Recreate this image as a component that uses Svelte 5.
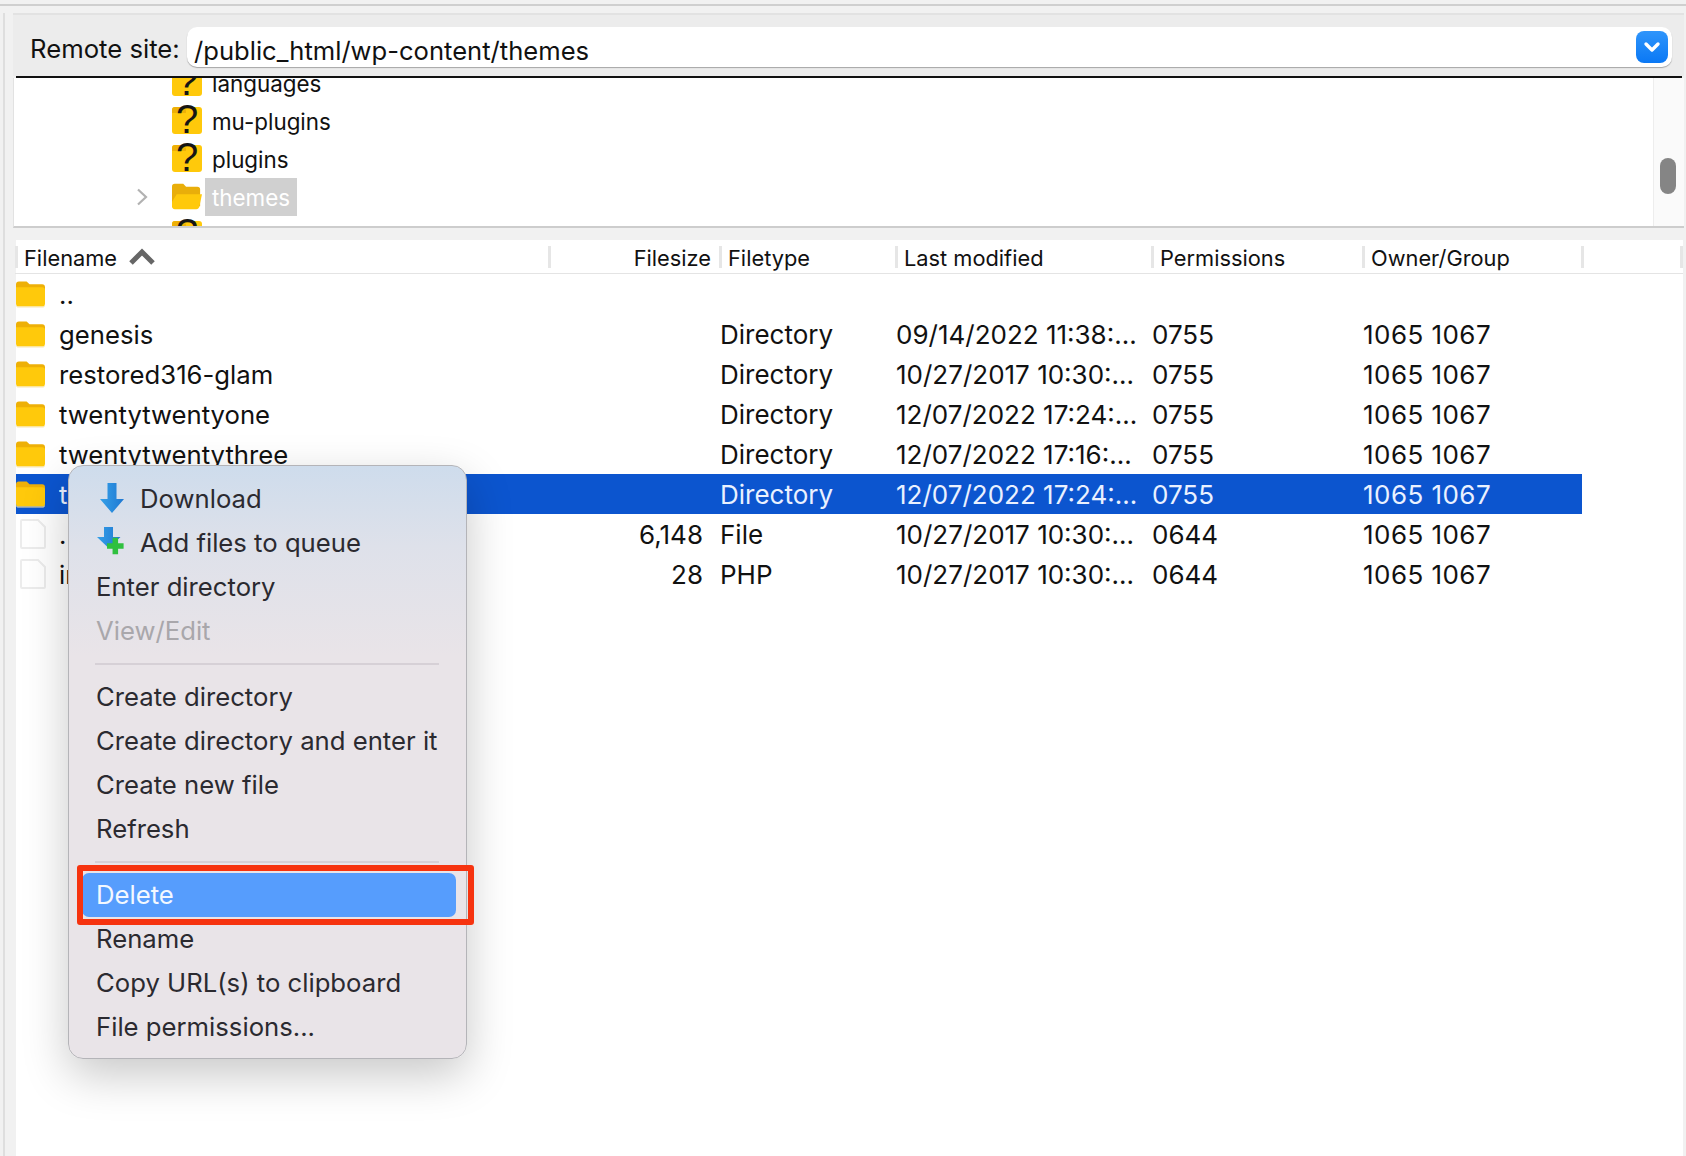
<script>
  const files = [
    { name: '..', size: '', type: '', date: '', perm: '', owner: '', icon: 'folder' },
    { name: 'genesis', size: '', type: 'Directory', date: '09/14/2022 11:38:...', perm: '0755', owner: '1065 1067', icon: 'folder' },
    { name: 'restored316-glam', size: '', type: 'Directory', date: '10/27/2017 10:30:...', perm: '0755', owner: '1065 1067', icon: 'folder' },
    { name: 'twentytwentyone', size: '', type: 'Directory', date: '12/07/2022 17:24:...', perm: '0755', owner: '1065 1067', icon: 'folder' },
    { name: 'twentytwentythree', size: '', type: 'Directory', date: '12/07/2022 17:16:...', perm: '0755', owner: '1065 1067', icon: 'folder' },
    { name: 'twentytwentytwo', size: '', type: 'Directory', date: '12/07/2022 17:24:...', perm: '0755', owner: '1065 1067', icon: 'folder', selected: true },
    { name: '.DS_Store', size: '6,148', type: 'File', date: '10/27/2017 10:30:...', perm: '0644', owner: '1065 1067', icon: 'file' },
    { name: 'index.php', size: '28', type: 'PHP', date: '10/27/2017 10:30:...', perm: '0644', owner: '1065 1067', icon: 'file' }
  ];

  const tree = [
    { name: 'languages', icon: 'unknown' },
    { name: 'mu-plugins', icon: 'unknown' },
    { name: 'plugins', icon: 'unknown' },
    { name: 'themes', icon: 'open', selected: true },
    { name: 'uploads', icon: 'unknown' }
  ];

  const columns = ['Filesize', 'Filetype', 'Last modified', 'Permissions', 'Owner/Group'];

  const topMenu = ['Enter directory'];
  const createMenu = ['Create directory', 'Create directory and enter it', 'Create new file', 'Refresh'];
  const bottomMenu = ['Rename', 'Copy URL(s) to clipboard', 'File permissions...'];
</script>

{#snippet folder()}
  <svg class="folder" viewBox="0 0 30 28">
    <path d="M0 4q0-3 3-3h8l3 3h13q3 0 3 3v5H0z" fill="#eeb007" />
    <path d="M0 7h27q3 0 3 3v14q0 3-3 3H3q-3 0-3-3z" fill="#ffc90b" />
    <path d="M3 27h24q3 0 3-3v1q0 3-3 3H3q-3 0-3-3v-1q0 3 3 3z" fill="#f7e6b0" />
  </svg>
{/snippet}

{#snippet unknown()}
  <svg class="tree-icon" viewBox="0 0 30 32">
    <path d="M0 6q0-3 3-3h24q3 0 3 3v21q0 3-3 3H3q-3 0-3-3z" fill="#ffc90b" />
    <path d="M0 6q0-3 3-3h8l3 3v3H0z" fill="#eeb007" />
    <text x="15" y="29" text-anchor="middle" class="qmark">?</text>
  </svg>
{/snippet}

{#snippet open()}
  <svg class="tree-icon" viewBox="0 0 32 32">
    <path d="M0 6q0-3 3-3h9l3 3h12q3 0 3 3v18H0z" fill="#e9ae0a" />
    <path d="M5 14h27l-3 14q-1 2-3 2H3q-3 0-3-3v-5z" fill="#ffc90b" />
  </svg>
{/snippet}

<div class="app">
  <div class="topline"></div>
  <div class="body">
    <div class="rail"></div>
    <div class="main">
      <div class="site">
        <span class="site-label">Remote site:</span>
        <div class="site-input">
          <span class="site-path">/public_html/wp-content/themes</span>
          <span class="site-btn">
            <svg viewBox="0 0 32 32" width="32" height="32">
              <path d="M10 13l6 6 6-6" fill="none" stroke="#fff" stroke-width="3.4" stroke-linecap="round" stroke-linejoin="round" />
            </svg>
          </span>
        </div>
      </div>
      <div class="rule"></div>

      <div class="tree">
        <div class="tree-rows">
          {#each tree as node}
            <div class="tree-row">
              <span class="twisty">
                {#if node.selected}
                  <svg viewBox="0 0 12 18" width="12" height="18">
                    <path d="M2 1.500l8 7.500-8 7.500" fill="none" stroke="#b2b2b2" stroke-width="2.2" />
                  </svg>
                {/if}
              </span>
              {#if node.icon === 'open'}
                {@render open()}
              {:else}
                {@render unknown()}
              {/if}
              <span class="tree-name" class:selected={node.selected}>{node.name}</span>
            </div>
          {/each}
        </div>
        <div class="scrollbar"><div class="thumb"></div></div>
      </div>

      <div class="list">
        <div class="grid head">
          <div class="th name">
            Filename
            <svg viewBox="0 0 28 18" width="28" height="18">
              <path d="M3 15L14 4l11 11" fill="none" stroke="#666" stroke-width="5" />
            </svg>
          </div>
          {#each columns as col, i}
            <div class="th" class:right={i === 0}>{col}</div>
          {/each}
          <div class="th"></div>
        </div>
        {#each files as file}
          <div class="grid row" class:selected={file.selected}>
            <div class="td name">
              {#if file.icon === 'folder'}
                {@render folder()}
              {:else}
                <svg class="file" viewBox="0 0 26 30">
                  <path d="M2 1h16l7 7v20q0 1-1 1H2q-1 0-1-1V2q0-1 1-1z" fill="#fff" stroke="#ececec" stroke-width="2" />
                </svg>
              {/if}
              <span class="filename">{file.name}</span>
            </div>
            <div class="td size">{file.size}</div>
            <div class="td">{file.type}</div>
            <div class="td">{file.date}</div>
            <div class="td">{file.perm}</div>
            <div class="td owner">{file.owner}</div>
          </div>
        {/each}
      </div>
    </div>
  </div>

  <div class="menu">
    <div class="item has-icon">
      <svg class="menu-icon" viewBox="0 0 26 32">
        <defs>
          <linearGradient id="arrow" x1="0" y1="0" x2="1" y2="0">
            <stop offset="0" stop-color="#35a0e8" />
            <stop offset="1" stop-color="#1f78d2" />
          </linearGradient>
        </defs>
        <path d="M8.500 1h9v16H25L13 31 1 17h7.500z" fill="url(#arrow)" />
      </svg>
      Download
    </div>
    <div class="item has-icon">
      <svg class="menu-icon queue" viewBox="0 0 30 32">
        <path d="M8 1h9v10h7.500L12.500 22 1 11h7z" fill="url(#arrow)" />
        <path d="M18 16h6v6h6v6h-6v6h-6v-6h-6v-6h6z" fill="#2fc03f" transform="translate(0 -3) scale(.92)" />
      </svg>
      Add files to queue
    </div>
    {#each topMenu as label}
      <div class="item">{label}</div>
    {/each}
    <div class="item disabled">View/Edit</div>
    <div class="sep"></div>
    {#each createMenu as label}
      <div class="item">{label}</div>
    {/each}
    <div class="sep"></div>
    <div class="item active">Delete</div>
    {#each bottomMenu as label}
      <div class="item">{label}</div>
    {/each}
  </div>
  <div class="callout"></div>
</div>

<style>
  :global(body) {
    margin: 0;
  }

  .app {
    position: relative;
    display: flex;
    flex-direction: column;
    height: 1156px;
    overflow: hidden;
    background: #f1f1f1;
    font-family: Inter, 'Noto Sans', sans-serif;
    color: #111;
  }

  .topline {
    box-sizing: border-box;
    height: 6px;
    border-bottom: 2px solid #cfcfcf;
  }

  .body {
    flex: 1;
    display: flex;
    min-height: 0;
    padding-top: 7px;
  }

  .rail {
    width: 3px;
    border-right: 2px solid #dedede;
  }

  .main {
    display: flex;
    flex-direction: column;
    width: 1671px;
    margin-left: 8px;
  }

  .site {
    box-sizing: border-box;
    display: flex;
    align-items: center;
    height: 63px;
    padding: 3px 12px 0 17px;
    background: #ececec;
    border-top: 2px solid #e2e2e2;
  }

  .site-label {
    position: relative;
    top: 2px;
    width: 157px;
    font-size: 25.7px;
    line-height: 40px;
  }

  .site-input {
    flex: 1;
    display: flex;
    align-items: center;
    justify-content: space-between;
    height: 40px;
    padding: 0 4px 0 7px;
    background: #fff;
    border-radius: 10px;
    box-shadow: 0 1px 1px rgba(0, 0, 0, 0.3);
  }

  .site-path {
    font-size: 25.6px;
    position: relative;
    top: 3px;
  }

  .site-btn {
    width: 32px;
    height: 32px;
    border-radius: 8px;
    background: linear-gradient(#2f95fb, #0a78f5);
  }

  .rule {
    height: 2px;
    margin: 0 2px 0 3px;
    background: #111;
  }

  .tree {
    flex: none;
    display: flex;
    height: 148px;
    overflow: hidden;
    background: #fff;
    border-bottom: 2px solid #cdcdcd;
    border-left: 1px solid #e2e2e2;
  }

  .tree-rows {
    flex: 1;
    margin-top: -14px;
  }

  .tree-row {
    display: flex;
    align-items: center;
    height: 38px;
  }

  .twisty {
    display: flex;
    justify-content: center;
    width: 12px;
    margin: 0 24px 0 122px;
  }

  .tree-icon {
    flex: none;
    width: 30px;
    height: 32px;
    margin-top: -3px;
    overflow: visible;
  }

  .qmark {
    font-family: 'Liberation Sans', sans-serif;
    font-size: 40px;
    fill: #151515;
  }

  .tree-name {
    margin-left: 3px;
    padding: 2px 7px 0;
    font-size: 22.4px;
    line-height: 36px;
  }

  .tree-name.selected {
    background: #d0d0d0;
    color: #fff;
  }

  .scrollbar {
    box-sizing: border-box;
    width: 31px;
    padding: 80px 0 0 6px;
    background: #fafafa;
    border-left: 1px solid #ededed;
  }

  .thumb {
    width: 16px;
    height: 36px;
    border-radius: 8px;
    background: #858585;
  }

  .list {
    flex: 1;
    margin: 12px 1px 0 3px;
    background: #fff;
  }

  .grid {
    display: grid;
    grid-template-columns: 533px 171px 176px 256px 211px 219px 1fr;
  }

  .head {
    align-items: center;
    height: 34px;
    margin-left: -1px;
    border-bottom: 1px solid #e4e4e4;
    box-sizing: border-box;
  }

  .th {
    box-sizing: border-box;
    height: 22px;
    padding: 1px 0 0 6px;
    border-left: 3px solid #e6e6e6;
    font-size: 21.8px;
    line-height: 22px;
    white-space: nowrap;
  }

  .th:last-child {
    border-right: 3px solid #e6e6e6;
  }

  .th.right {
    padding-right: 8px;
    text-align: right;
  }

  .th.name {
    display: flex;
    align-items: center;
    gap: 11px;
    padding-top: 3px;
  }

  .th.name svg {
    margin-top: -3px;
  }

  .row {
    height: 40px;
    align-items: center;
    font-size: 26px;
    line-height: 42px;
    white-space: nowrap;
  }

  .row.selected {
    grid-template-columns: 533px 171px 176px 256px 211px 219px;
    width: 1566px;
    background: #0c55cf;
    color: #eaf1ff;
  }

  .td {
    height: 40px;
  }

  .td.name {
    display: flex;
    align-items: center;
    gap: 14px;
  }

  .filename {
    margin-top: 2px;
    font-size: 25.7px;
  }

  .td.size {
    padding-right: 17px;
    text-align: right;
  }

  .td.owner {
    letter-spacing: 0.45px;
  }

  .folder {
    flex: none;
    width: 29px;
    height: 28px;
  }

  .file {
    flex: none;
    width: 26px;
    height: 30px;
    margin: 0 -1px 0 4px;
  }

  .menu {
    position: absolute;
    left: 68px;
    top: 465px;
    box-sizing: border-box;
    width: 399px;
    height: 594px;
    padding: 11px 10px 0 13px;
    background: linear-gradient(180deg, #cedcec 0, #dee1ea 80px, #e9e4e8 190px);
    border: 1px solid #b4b4b8;
    border-radius: 15px;
    box-shadow: 0 16px 46px rgba(0, 0, 0, 0.22);
    font-size: 25.7px;
    color: #2b2a30;
  }

  .item {
    box-sizing: border-box;
    display: flex;
    align-items: center;
    height: 44px;
    padding: 0 0 2px 14px;
    border-radius: 7px;
    white-space: nowrap;
  }

  .item.has-icon {
    padding-left: 58px;
  }

  .menu-icon {
    position: absolute;
    left: 30px;
    top: 16px;
    width: 26px;
    height: 32px;
  }

  .menu-icon.queue {
    left: 27px;
    top: 60px;
    width: 30px;
    height: 32px;
  }

  .item.disabled {
    color: #a9a7ab;
  }

  .item.active {
    background: #569dfd;
    color: #f3f8ff;
  }

  .sep {
    height: 2px;
    margin: 10px 17px 10px 13px;
    background: #d6d0d6;
  }

  .callout {
    position: absolute;
    left: 77px;
    top: 865px;
    box-sizing: border-box;
    width: 397px;
    height: 60px;
    border: 6px solid #f6330f;
    border-radius: 3px;
  }
</style>
